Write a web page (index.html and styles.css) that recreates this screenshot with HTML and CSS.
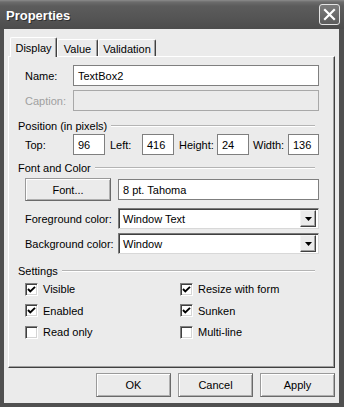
FILE: index.html
```html
<!DOCTYPE html>
<html>
<head>
<meta charset="utf-8">
<title>Properties</title>
<link rel="stylesheet" href="styles.css">
</head>
<body>
<div class="window">
  <div class="titlebar">
    <span class="title">Properties</span>
    <span class="close">
      <svg width="13" height="13" viewBox="0 0 13 13"><path d="M2 2 L11 11 M11 2 L2 11" stroke="#fff" stroke-width="2.2" stroke-linecap="square" fill="none"/></svg>
    </span>
  </div>
  <div class="client">
    <div class="tabs">
      <div class="tab active">Display</div>
      <div class="tab tab-value">Value</div>
      <div class="tab tab-validation">Validation</div>
    </div>
    <div class="panel">
      <div class="row row-name">
        <label class="lbl lbl-name">Name:</label>
        <div class="textbox">TextBox2</div>
      </div>
      <div class="row row-caption">
        <label class="lbl lbl-name disabled">Caption:</label>
        <div class="textbox is-disabled"></div>
      </div>

      <div class="group group-position">Position (in pixels)</div>
      <div class="row row-pos">
        <label class="lbl lbl-top">Top:</label>
        <div class="textbox small">96</div>
        <label class="lbl lbl-left">Left:</label>
        <div class="textbox small">416</div>
        <label class="lbl lbl-height">Height:</label>
        <div class="textbox small">24</div>
        <label class="lbl lbl-width">Width:</label>
        <div class="textbox small w31">136</div>
      </div>

      <div class="group group-font">Font and Color</div>
      <div class="row row-font">
        <button class="btn btn-font">Font...</button>
        <div class="textbox">8 pt. Tahoma</div>
      </div>
      <div class="row row-fore">
        <label class="lbl lbl-color">Foreground color:</label>
        <div class="combo">
          <span class="combo-text">Window Text</span>
          <span class="combo-btn"><svg width="7" height="4" viewBox="0 0 7 4"><path d="M0 0 H7 L3.5 4 Z" fill="#000"/></svg></span>
        </div>
      </div>
      <div class="row row-back">
        <label class="lbl lbl-color">Background color:</label>
        <div class="combo">
          <span class="combo-text">Window</span>
          <span class="combo-btn"><svg width="7" height="4" viewBox="0 0 7 4"><path d="M0 0 H7 L3.5 4 Z" fill="#000"/></svg></span>
        </div>
      </div>

      <div class="group group-settings">Settings</div>
      <div class="checks">
        <div class="check"><span class="box"><svg width="9" height="9" viewBox="0 0 9 9"><path d="M1 4 L3.3 6.5 L8 1.8" stroke="#000" stroke-width="1.9" fill="none"/></svg></span>Visible</div>
        <div class="check"><span class="box"><svg width="9" height="9" viewBox="0 0 9 9"><path d="M1 4 L3.3 6.5 L8 1.8" stroke="#000" stroke-width="1.9" fill="none"/></svg></span>Resize with form</div>
        <div class="check"><span class="box"><svg width="9" height="9" viewBox="0 0 9 9"><path d="M1 4 L3.3 6.5 L8 1.8" stroke="#000" stroke-width="1.9" fill="none"/></svg></span>Enabled</div>
        <div class="check"><span class="box"><svg width="9" height="9" viewBox="0 0 9 9"><path d="M1 4 L3.3 6.5 L8 1.8" stroke="#000" stroke-width="1.9" fill="none"/></svg></span>Sunken</div>
        <div class="check"><span class="box"></span>Read only</div>
        <div class="check"><span class="box"></span>Multi-line</div>
      </div>
    </div>
    <div class="buttons">
      <button class="btn btn-dlg">OK</button>
      <button class="btn btn-dlg">Cancel</button>
      <button class="btn btn-dlg">Apply</button>
    </div>
  </div>
</div>
</body>
</html>
```

FILE: styles.css
```css
* { box-sizing: border-box; }
html, body { margin: 0; padding: 0; }
body {
  width: 344px;
  height: 407px;
  overflow: hidden;
  background: #4f4f4f;
  font-family: "Liberation Sans", Arial, sans-serif;
  font-size: 11px;
  color: #000;
}
.window {
  width: 344px;
  height: 407px;
  display: flex;
  flex-direction: column;
}
.titlebar {
  height: 29px;
  flex: none;
  display: flex;
  align-items: center;
  justify-content: space-between;
  padding: 0 4px 0 6px;
  background: linear-gradient(#8c8c8c 0, #6c6c6c 2px, #5c5c5c 6px, #535353 20px, #4c4c4c 29px);
}
.title {
  color: #fff;
  font-weight: bold;
  font-size: 13px;
  text-shadow: 1px 1px 0 #303030;
  margin-top: 1px;
}
.close {
  width: 21px;
  height: 21px;
  border: 1px solid #e4e4e4;
  border-radius: 3px;
  background: linear-gradient(#7c7c7c, #5c5c5c);
  display: flex;
  align-items: center;
  justify-content: center;
}
.client {
  flex: 1;
  display: flex;
  flex-direction: column;
  background: #ebebeb;
  border-left: 4px solid #505050;
  border-right: 5px solid #505050;
  border-bottom: 4px solid #505050;
}
.tabs {
  display: flex;
  align-items: flex-end;
  height: 19px;
  margin: 8px 0 0 6px;
}
.tab {
  height: 17px;
  display: flex;
  align-items: center;
  justify-content: center;
  background: #ebebeb;
  border-top: 1px solid #fff;
  border-left: 1px solid #fff;
  border-right: 1px solid #404040;
  box-shadow: inset -1px 0 0 #a0a0a0;
  border-radius: 2px 2px 0 0;
  padding-top: 1px;
}
.tab.active {
  width: 47px;
  height: 20px;
  margin-bottom: -1px;
  position: relative;
  z-index: 1;
  padding-bottom: 1px;
}
.tab-value { width: 41px; }
.tab-validation { width: 58px; }
.panel {
  height: 312px;
  margin: 0 4px;
  border-top: 1px solid #fff;
  border-left: 1px solid #fff;
  border-right: 1px solid #404040;
  border-bottom: 1px solid #404040;
  box-shadow: inset -1px -1px 0 #a0a0a0;
  padding: 8px 15px 0 9px;
  display: flex;
  flex-direction: column;
}
.row {
  display: flex;
  align-items: center;
  height: 21px;
  padding-left: 7px;
  flex: none;
}
.lbl { flex: none; }
.lbl.disabled { color: #a0a0a0; }
.lbl-name { width: 48px; }
.lbl-top { width: 48px; }
.lbl-left { width: 32px; margin-left: 5px; }
.lbl-height { width: 38px; margin-left: 5px; }
.lbl-width { width: 35px; margin-left: 4px; }
.lbl-color { width: 93px; }
.textbox {
  flex: 1;
  height: 21px;
  background: #fff;
  border: 1px solid #7f7f7f;
  padding: 0 4px;
  display: flex;
  align-items: center;
}
.textbox.is-disabled {
  background: #ebebeb;
  border-color: #a8a8a8;
}
.textbox.small { flex: none; width: 32px; }
.textbox.w31 { width: 31px; }
.row-caption { margin-top: 4px; }
.group {
  display: flex;
  align-items: center;
  gap: 4px;
  height: 13px;
  margin-right: 4px;
  flex: none;
}
.group::after {
  content: "";
  flex: 1;
  height: 1px;
  background: #b4b4b4;
  box-shadow: 0 1px 0 #fff;
}
.group-position { margin-top: 8px; }
.row-pos { margin-top: 2px; }
.group-font { margin-top: 6px; }
.row-font { margin-top: 4px; height: 23px; }
.btn {
  font-family: "Liberation Sans", Arial, sans-serif;
  font-size: 11px;
  color: #000;
  background: #ebebeb;
  border: 1px solid #6a6a6a;
  border-top-color: #9a9a9a;
  border-left-color: #9a9a9a;
  box-shadow: inset 1px 1px 0 #fff, inset -1px -1px 0 #b0b0b0;
  padding: 0;
}
.btn-font {
  width: 86px;
  height: 23px;
  margin-right: 7px;
  flex: none;
}
.row-font .textbox { height: 21px; }
.row-fore { margin-top: 7px; }
.row-back { margin-top: 4px; }
.combo {
  flex: 1;
  height: 21px;
  display: flex;
  align-items: center;
  background: #fff;
  border-top: 1px solid #7a7a7a;
  border-left: 1px solid #7a7a7a;
  border-right: 1px solid #d8d8d8;
  border-bottom: 1px solid #d8d8d8;
  box-shadow: inset 1px 1px 0 #404040;
  padding: 2px 2px 2px 4px;
}
.combo-text { flex: 1; }
.combo-btn {
  width: 16px;
  height: 17px;
  flex: none;
  display: flex;
  align-items: center;
  justify-content: center;
  background: #ebebeb;
  border-top: 1px solid #f4f4f4;
  border-left: 1px solid #f4f4f4;
  border-right: 1px solid #404040;
  border-bottom: 1px solid #404040;
  box-shadow: inset -1px -1px 0 #a0a0a0;
}
.group-settings { margin-top: 10px; }
.checks {
  display: grid;
  grid-template-columns: 155px 1fr;
  grid-auto-rows: 16px;
  row-gap: 5.5px;
  padding-left: 7px;
  margin-top: 4px;
}
.check {
  display: flex;
  align-items: center;
  gap: 5px;
}
.box {
  width: 13px;
  height: 13px;
  flex: none;
  background: #fff;
  border-top: 1px solid #808080;
  border-left: 1px solid #808080;
  border-right: 1px solid #fff;
  border-bottom: 1px solid #fff;
  box-shadow: inset 1px 1px 0 #404040, inset -1px -1px 0 #d4d4d4;
  display: flex;
  align-items: center;
  justify-content: center;
}
.buttons {
  display: flex;
  justify-content: flex-end;
  gap: 7px;
  margin: 5px 4px 0 0;
}
.btn-dlg {
  width: 75px;
  height: 24px;
}
```
